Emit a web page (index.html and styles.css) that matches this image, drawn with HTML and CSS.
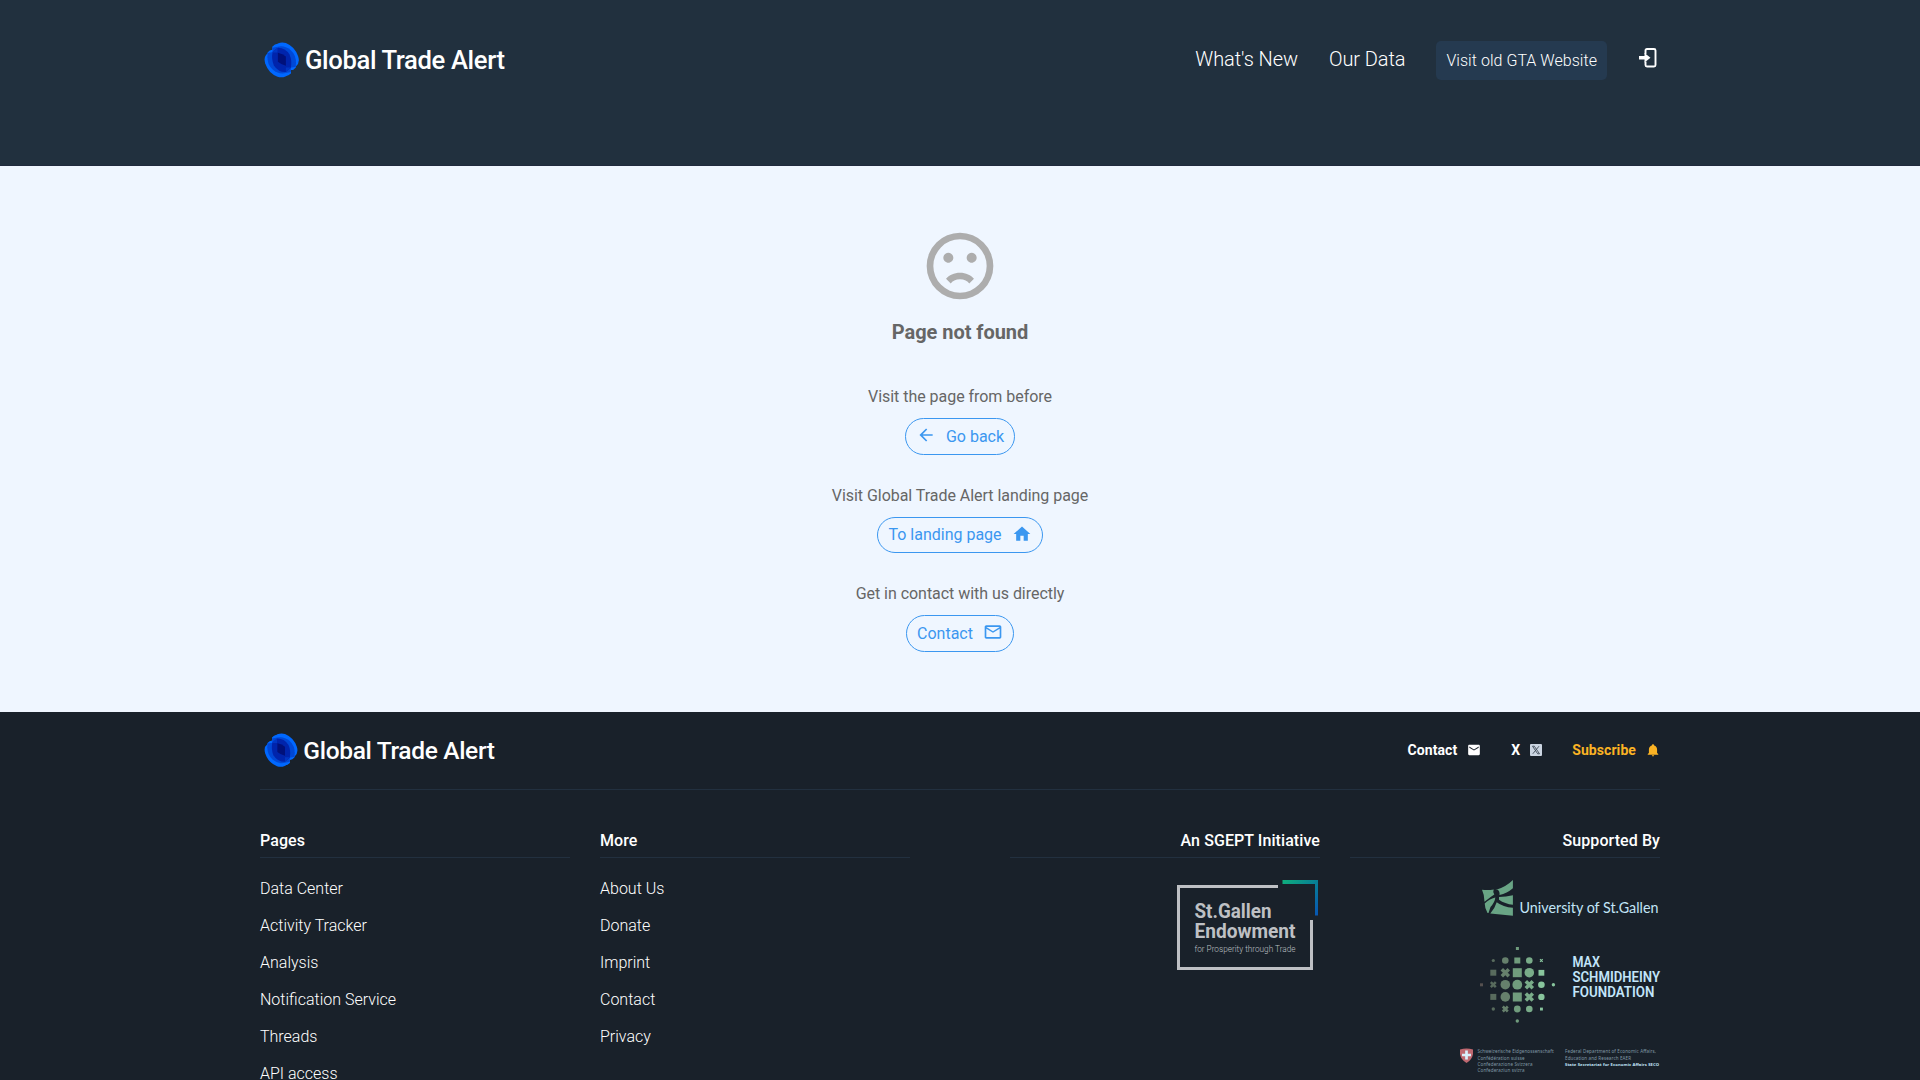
FILE: index.html
```html
<!DOCTYPE html>
<html lang="en">
<head>
<meta charset="utf-8">
<title>Global Trade Alert</title>
<link rel="stylesheet" href="styles.css">
</head>
<body>
<svg class="defs" aria-hidden="true">
  <symbol id="brand" viewBox="0 0 243 36">
    <g transform="translate(.2 .4) scale(.3333)">
      <g fill="#0068ff">
        <path d="M10 33Q-3 43 3 63Q13 92 40 103Q52 107 64 102L80 92V60L40 20Z"/>
        <path d="M95 72Q108 62 102 42Q92 13 65 2Q53-2 41 3L25 13V45L65 85Z"/>
        <path d="M25 28V12Q33 4 42 5V20ZM10 44V30Q17 21 26 22V34ZM80 77V93Q72 101 63 100V85ZM95 61V75Q88 84 79 83V71Z"/>
      </g>
      <g fill="#0048d6">
        <path d="M10 42Q8 66 26 82Q44 97 65 92V60L30 30Z"/>
        <path d="M95 63Q97 39 79 23Q61 8 40 13V45L75 75Z"/>
        <path d="M25 30V16L40 13V30ZM10 46V32L26 29V44ZM80 75V89L65 92V75ZM95 59V73L79 76V61Z"/>
      </g>
      <path d="M25 29L40 16Q62 15 76 36Q84 54 80 76L65 89Q43 90 29 69Q21 51 25 29Z" fill="#0024ac"/>
      <path d="M25 29L40 16V30H25ZM65 75H80L65 89Z" fill="#0036c4"/>
      <path d="M41 31Q56 34 65 42V70Q52 67 41 58Z" fill="#00107a"/>
    </g>
    <text x="41" y="26.8" font-size="25.6" font-weight="500" fill="#fff" textLength="200">Global Trade Alert</text>
  </symbol>
</svg>

<header class="header">
  <div class="wrap header-row">
    <a class="logo"><svg class="brand" width="243" height="36"><use href="#brand"/></svg></a>
    <nav class="nav">
      <a class="nav-link">What's New</a>
      <a class="nav-link">Our Data</a>
      <a class="nav-old">Visit old GTA Website</a>
      <svg class="login" width="18" height="20" viewBox="0 0 18 20"><path d="M6.500 6V2.500Q6.500 1 8 1H15Q16.500 1 16.500 2.500V17Q16.500 18.500 15 18.500H8Q6.500 18.500 6.500 17V13.500" fill="none" stroke="#fff" stroke-width="1.900"/><path d="M0 8H5.500V5L11.500 9.800L5.500 14.500V11.500H0Z" fill="#fff"/></svg>
    </nav>
  </div>
</header>

<main class="main">
  <svg class="sad" width="80" height="80" viewBox="0 0 24 24"><path d="M20 12A8 8 0 1 0 12 20A8 8 0 0 0 20 12M22 12A10 10 0 1 1 12 2A10 10 0 0 1 22 12M15.500 8C16.300 8 17 8.700 17 9.500S16.300 11 15.500 11 14 10.300 14 9.500 14.700 8 15.500 8M10 9.500C10 10.300 9.300 11 8.500 11S7 10.300 7 9.500 7.700 8 8.500 8 10 8.700 10 9.500M12 14C13.750 14 15.290 14.720 16.190 15.810L14.770 17.230C14.320 16.500 13.250 16 12 16S9.680 16.500 9.230 17.230L7.810 15.810C8.710 14.720 10.250 14 12 14Z"/></svg>
  <h1 class="title">Page not found</h1>
  <section class="option">
    <p>Visit the page from before</p>
    <a class="pill"><svg class="ico" width="20" height="20" viewBox="0 0 24 24"><path d="M20 11V13H8L13.500 18.500L12.080 19.920L4.160 12L12.080 4.080L13.500 5.500L8 11H20Z"/></svg>Go back</a>
  </section>
  <section class="option">
    <p>Visit Global Trade Alert landing page</p>
    <a class="pill">To landing page<svg class="ico" width="20" height="20" viewBox="0 0 24 24"><path d="M10 20V14H14V20H19V12H22L12 3L2 12H5V20H10Z"/></svg></a>
  </section>
  <section class="option">
    <p>Get in contact with us directly</p>
    <a class="pill">Contact<svg class="ico" width="20" height="20" viewBox="0 0 24 24"><path d="M22 6C22 4.900 21.100 4 20 4H4C2.900 4 2 4.900 2 6V18C2 19.100 2.900 20 4 20H20C21.100 20 22 19.100 22 18V6M20 6L12 11L4 6H20M20 18H4V8L12 13L20 8V18Z"/></svg></a>
  </section>
</main>

<footer class="footer">
  <div class="wrap">
    <div class="footer-top">
      <svg class="brand" width="233" height="34.5"><use href="#brand"/></svg>
      <div class="social">
        <a>Contact<svg width="14" height="14" viewBox="0 0 24 24"><path fill="currentColor" d="M20 8L12 13L4 8V6L12 11L20 6M20 3H4C2.900 3 2 3.900 2 5V19C2 20.100 2.900 21 4 21H20C21.100 21 22 20.100 22 19V5C22 3.900 21.100 3 20 3Z"/></svg></a>
        <a>X<svg class="x" width="12" height="12" viewBox="0 0 12 12"><rect width="12" height="12" rx="1" fill="#cbd5e1"/><path d="M2.500 2.200H4.300L9.500 9.800H7.700ZM9 2.200L2.800 9.800" fill="none" stroke="#404b57" stroke-width=".9"/></svg></a>
        <a class="subscribe">Subscribe<svg width="14" height="14" viewBox="0 0 24 24"><path fill="currentColor" d="M21 19V20H3V19L5 17V11C5 7.900 7.030 5.170 10 4.290V4A2 2 0 0 1 12 2A2 2 0 0 1 14 4V4.290C16.970 5.170 19 7.900 19 11V17L21 19M14 21A2 2 0 0 1 12 23A2 2 0 0 1 10 21"/></svg></a>
      </div>
    </div>
    <div class="columns">
      <div class="col">
        <h2>Pages</h2>
        <ul><li>Data Center</li><li>Activity Tracker</li><li>Analysis</li><li>Notification Service</li><li>Threads</li><li>API access</li></ul>
      </div>
      <div class="col">
        <h2>More</h2>
        <ul><li>About Us</li><li>Donate</li><li>Imprint</li><li>Contact</li><li>Privacy</li></ul>
      </div>
      <div class="col right third">
        <h2>An SGEPT Initiative</h2>
        <svg class="endowment" width="144" height="92" viewBox="0 0 144 92">
          <defs><linearGradient id="corner" x1="0" y1="0" x2="1" y2="1"><stop offset="0" stop-color="#0fb07c"/><stop offset=".5" stop-color="#087f95"/><stop offset="1" stop-color="#0755b5"/></linearGradient></defs>
          <path d="M102 6.500H2.500V88.500H135.500V40" fill="none" stroke="#bec0c4" stroke-width="3"/>
          <path d="M106.500 0H142V35.500H139V4H106.500Z" fill="url(#corner)"/>
          <g fill="#bec0c4">
            <text x="18.500" y="38" font-size="19.500" font-weight="700" textLength="77" lengthAdjust="spacingAndGlyphs">St.Gallen</text>
            <text x="18.500" y="57.700" font-size="19.500" font-weight="700" textLength="101" lengthAdjust="spacingAndGlyphs">Endowment</text>
            <text x="18.500" y="71.700" font-size="8.800" font-weight="300" textLength="101" lengthAdjust="spacingAndGlyphs">for Prosperity through Trade</text>
          </g>
        </svg>
      </div>
      <div class="col right">
        <h2>Supported By</h2>
        <svg class="hsg" width="180" height="38" viewBox="0 0 180 38">
          <g fill="#69a585">
            <path d="M2 10.700Q8 11.500 13.700 10.500Q12.500 13 14.300 15.500L11 17.700L4.500 22.700Q4.500 16 2 10.700Z"/>
            <path d="M15.500 11Q26 8 32.900 1V9.300Q27 14.500 19.500 16Q20 12 17.500 10.800Z"/>
            <path d="M4.700 24.500Q9 20 15.300 18.500Q15 23 10.500 28L8.500 34H7.500Q4.700 29 4.700 24.500Z"/>
            <path d="M19 18Q26 18 32.900 16.300V25.800Q25 25 19 20.800Z"/>
            <path d="M16.700 23.200Q23 28 32.900 28.800V36.800L10.300 34.500Q15 29 16.700 23.200Z"/>
          </g>
          <text class="uni" x="39.500" y="33.500" font-size="14.800" fill="#c2e5f7" textLength="139" lengthAdjust="spacingAndGlyphs">University of St.Gallen</text>
        </svg>
        <svg class="msf" width="180" height="78" viewBox="0 0 180 78">
          <g fill="#709c7d">
            <rect x="35.900" y="1" width="3" height="3"/><circle cx="37.300" cy="75" r="1.700"/>
            <rect x="34.300" y="11.500" width="6" height="6"/>
            <rect x="32.800" y="22.200" width="9" height="9"/><circle cx="37.300" cy="38.700" r="4.900"/>
            <rect x="32.800" y="46.500" width="9" height="9"/><circle cx="37.300" cy="63" r="3.400"/>
          </g>
          <g fill="#66806c">
            <circle cx="25.300" cy="14.500" r="3.300"/><path d="M21.800 23.200L28.800 30.200M28.800 23.200L21.800 30.200" stroke="#66806c" stroke-width="3.500"/>
            <circle cx="25.300" cy="38.700" r="4.800"/><circle cx="25.300" cy="50.900" r="4.800"/>
            <path d="M22.800 60.500L27.800 65.500M27.800 60.500L22.800 65.500" stroke="#66806c" stroke-width="2.600"/>
          </g>
          <g fill="#586b5d">
            <circle cx="13.300" cy="14.500" r="1.600"/><rect x="10.300" y="23.700" width="6" height="6"/>
            <path d="M10.800 36.200L15.800 41.200M15.800 36.200L10.800 41.200" stroke="#586b5d" stroke-width="2.500"/>
            <rect x="10.300" y="47.900" width="6" height="6"/><circle cx="13.300" cy="63" r="1.700"/>
            <rect x="0" y="37.300" width="3" height="3" fill="#55504f"/>
          </g>
          <g fill="#79ac89">
            <circle cx="49.300" cy="14.500" r="3.300"/><circle cx="49.300" cy="26.700" r="4.800"/>
            <path d="M45.800 35.200L52.800 42.200M52.800 35.200L45.800 42.200M45.800 47.400L52.800 54.400M52.800 47.400L45.800 54.400" stroke="#79ac89" stroke-width="3.500"/>
            <circle cx="49.300" cy="63" r="3.300"/>
          </g>
          <g fill="#88c59d">
            <path d="M60 13.200L62.700 15.900M62.700 13.200L60 15.900" stroke="#88c59d" stroke-width="1.200"/>
            <rect x="58.500" y="23.900" width="5.800" height="5.800"/><circle cx="61.400" cy="38.700" r="3.300"/><circle cx="61.400" cy="50.900" r="3.200"/>
            <rect x="60" y="61.600" width="2.900" height="2.900"/><circle cx="73.400" cy="38.700" r="1.700"/>
          </g>
          <g fill="#c2e5fa" font-size="14.200" font-weight="600">
            <text x="92.500" y="21" textLength="27.500" lengthAdjust="spacingAndGlyphs">MAX</text>
            <text x="92.500" y="36" textLength="87.500" lengthAdjust="spacingAndGlyphs">SCHMIDHEINY</text>
            <text x="92.500" y="51" textLength="82" lengthAdjust="spacingAndGlyphs">FOUNDATION</text>
          </g>
        </svg>
        <svg class="seco" width="201" height="26" viewBox="0 0 201 26">
          <path d="M1 1.500Q7.500-.3 14 1.500V6Q13 12 7.500 15Q2 12 1 6Z" fill="#bf6870"/>
          <path d="M7.500 2.500V11.500M3 7H12" stroke="#d9effb" stroke-width="2.700"/>
          <g class="tiny" fill="#8199a6" font-size="4.500">
            <text x="18.500" y="5.400" textLength="76">Schweizerische Eidgenossenschaft</text>
            <text x="18.500" y="11.600" textLength="47">Confédération suisse</text>
            <text x="18.500" y="17.900" textLength="55">Confederazione Svizzera</text>
            <text x="18.500" y="24.100" textLength="47">Confederaziun svizra</text>
            <text x="106" y="5.400" textLength="91">Federal Department of Economic Affairs,</text>
            <text x="106" y="11.600" textLength="66">Education and Research EAER</text>
            <text x="106" y="17.900" textLength="94" font-size="4.200" font-weight="700" fill="#c2e5fa">State Secretariat for Economic Affairs SECO</text>
          </g>
        </svg>
      </div>
    </div>
  </div>
</footer>
</body>
</html>
```
FILE: styles.css
```css
* { box-sizing: border-box; }
html, body { height: 100%; }
body {
  margin: 0;
  overflow: hidden;
  background: #19212a;
  font-family: Roboto, "Liberation Sans", sans-serif;
  font-size: 16px;
  line-height: 24px;
}
svg { display: block; flex: none; overflow: visible; }
h1, h2, p, ul { margin: 0; padding: 0; }
.defs { display: none; }
.wrap { width: 1400px; margin: 0 auto; }

.header { height: 166px; background: #21303e; border-bottom: 1px solid #202a3d; }
.header-row { display: flex; justify-content: space-between; padding: 41px 3px 0 3.500px; }
.logo { padding-top: 1px; }
.nav { display: flex; align-items: flex-start; color: #fff; font-weight: 300; }
.nav-link { margin-right: 31px; padding-top: 6px; font-size: 20px; letter-spacing: -.08px; }
.nav-old { height: 39px; margin-right: 32px; padding: 8px 10px; border-radius: 5px; background: #253a50; line-height: 24px; letter-spacing: .04px; }
.login { margin-top: 7px; }

.main {
  display: flex;
  flex-direction: column;
  align-items: center;
  height: 546px;
  padding-top: 60px;
  background: #eff6ff;
  color: #666;
}
.sad { fill: #adadad; }
.title { margin-top: 12px; font-size: 20px; line-height: 28px; font-weight: 700; letter-spacing: -.05px; }
.option { display: flex; flex-direction: column; align-items: center; margin-top: 28.500px; }
.option p { letter-spacing: -.04px; }
.title + .option { margin-top: 39px; }
.pill {
  display: flex;
  gap: 10px;
  height: 36.500px;
  margin: 9px 0 .5px;
  padding: 5.500px 10px 4px;
  border: 1px solid #3b97f0;
  border-radius: 19px;
  color: #3b97f0;
}
.ico { margin-top: .5px; fill: currentColor; }

.footer { height: 368px; overflow: hidden; color: #fff; background: #19212a; }
.footer-top { display: flex; justify-content: space-between; align-items: flex-start; height: 78px; padding: 21px 0 0 3.500px; border-bottom: 1px solid #22303f; }
.social { display: flex; gap: 30px; padding-top: 5px; font-size: 14px; font-weight: 700; }
.social a { display: flex; align-items: center; gap: 10px; letter-spacing: .08px; }
.social .subscribe { color: #fbb324; }
.columns { display: grid; grid-template-columns: 310px 310px 380px 310px; column-gap: 30px; padding-top: 36px; }
.third { margin-left: 70px; }
.col h2 { height: 32px; padding-top: 3px; border-bottom: 1px solid #22303f; font-size: 16px; font-weight: 500; letter-spacing: .08px; }
.col ul { padding-top: 18px; list-style: none; font-weight: 300; }
.col li { height: 37px; line-height: 26px; }
.right { display: flex; flex-direction: column; text-align: right; }
.right > svg { align-self: flex-end; }
.endowment { margin-top: 22px; }
.hsg { margin-top: 21px; }
.uni { font-family: Lato, sans-serif; }
.msf { margin-top: 29px; }
.seco { margin-top: 24px; }
.tiny { font-family: "Noto Sans", sans-serif; }
```
